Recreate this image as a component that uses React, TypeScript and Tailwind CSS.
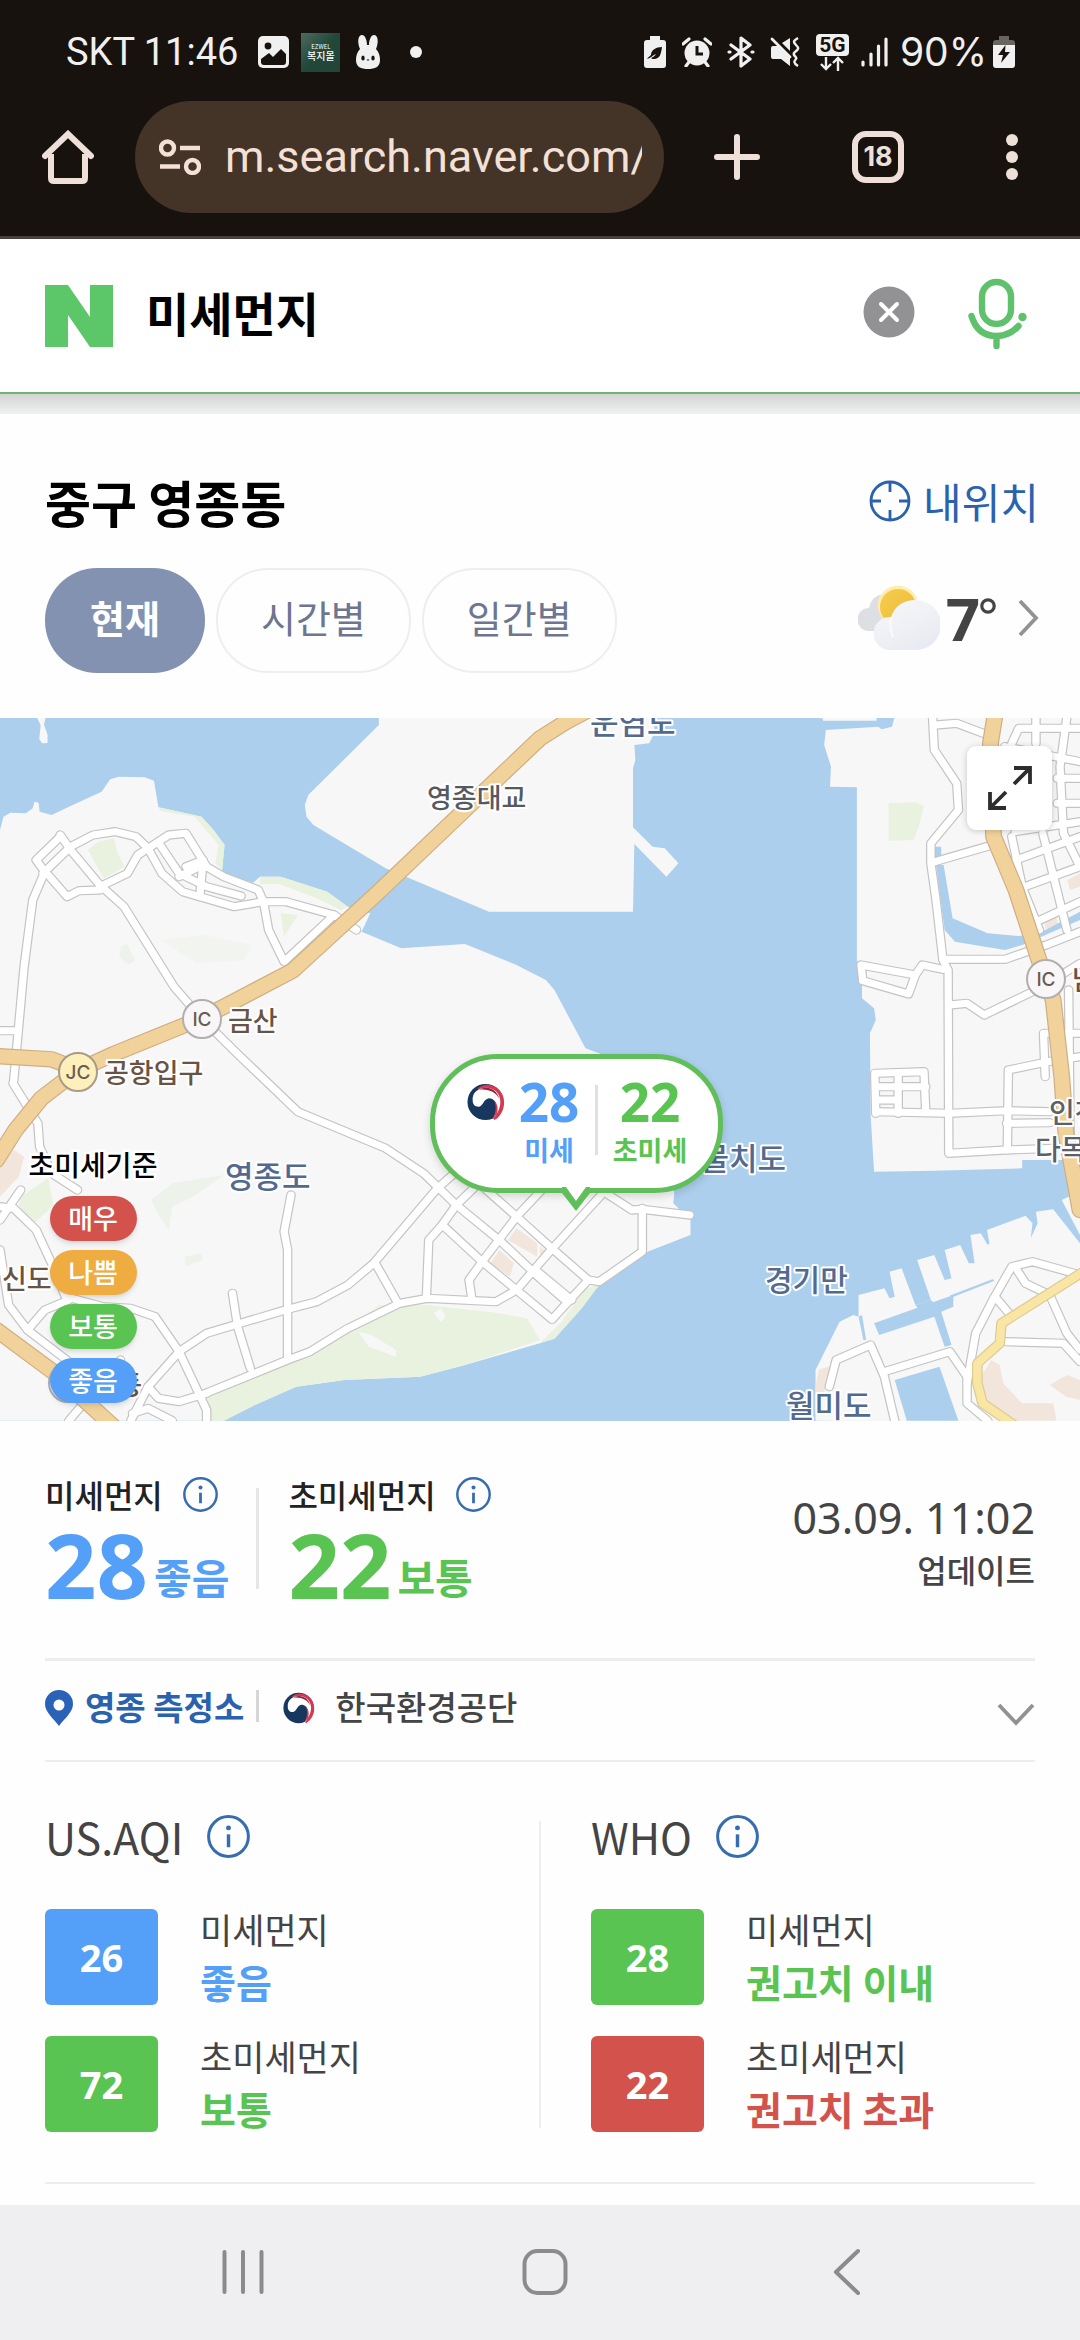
import React from "react";

const KR = "font-['Noto_Sans_CJK_KR',sans-serif]";

/* ---------- icons ---------- */

function Taegeuk({ className }: { className: string }) {
  return (
    <svg viewBox="0 0 40 40" className={className} aria-hidden="true">
      <circle cx="19.500" cy="20" r="19" fill="#17375e" />
      <path d="M11 6C20-2 34 2 38 14c3 10-1 20-9 25l-2-2c6-9 5-27-16-31Z" fill="#d23a52" />
      <path
        d="M6 19C5 10 12 5 20 5c10 0 16 8 15 17-1 7-4 12-9 17 5-4 7-9 6-14-1-6-5-9-9-9-6 1-6 9-11 9-4 0-6-3-6-6Z"
        fill="#fff"
      />
      <path d="M13 7c9-5 19 0 21 10-3-7-11-11-21-10Z" fill="#9c2340" />
    </svg>
  );
}

function InfoIcon({ className }: { className: string }) {
  return (
    <svg viewBox="0 0 40 40" className={className} aria-hidden="true">
      <circle cx="20" cy="20" r="18.500" fill="none" stroke="#356db0" strokeWidth="2.800" />
      <circle cx="20" cy="12" r="2.300" fill="#356db0" />
      <path d="M20 18v12" stroke="#356db0" strokeWidth="3.200" />
    </svg>
  );
}

function StatusLeft() {
  return (
    <div className="flex items-center">
      <span className="text-[38px] leading-10 text-[#f0f0f0]">SKT 11:46</span>
      <svg viewBox="0 0 31 32" className="ml-5 h-8 w-[31px]" aria-hidden="true">
        <rect width="31" height="32" rx="5" fill="#f0f0f0" />
        <circle cx="10" cy="10" r="3.400" fill="#17120e" />
        <path d="M3 23l8-6 4 4 8-8 5 5v8a3 3 0 0 1-3 3H6a3 3 0 0 1-3-3Z" fill="#17120e" />
      </svg>
      <span
        className={`${KR} ml-3 flex h-[39px] w-[39px] flex-col items-center justify-center bg-linear-to-br from-[#4d6b5e] via-[#21483a] to-[#234538] text-white`}
      >
        <span className="text-[6px] leading-[7px]">EZWEL</span>
        <span className="text-[10px] font-medium leading-[11px]">복지몰</span>
      </span>
      <svg viewBox="0 0 26 36" className="ml-[15px] h-9 w-[26px]" aria-hidden="true">
        <path
          d="M5 15C2 8 3 1 7 1c3 0 5 5 5 10h2c0-5 2-10 5-10 4 0 5 7 2 14 3 3 4 7 4 11 0 7-5 9-12 9S1 33 1 26c0-4 1-8 4-11Z"
          fill="#f0f0f0"
        />
        <ellipse cx="8" cy="24" rx="1.700" ry="2.600" fill="#17120e" />
        <ellipse cx="18" cy="24" rx="1.700" ry="2.600" fill="#17120e" />
        <path d="M11.500 25.500h3L13 27Z" fill="#17120e" />
      </svg>
      <span className="ml-[29px] h-3 w-3 rounded-full bg-[#f0f0f0]" />
    </div>
  );
}

function StatusRight() {
  return (
    <div className="flex items-center">
      <svg viewBox="0 0 22 32" className="h-8 w-[22px]" aria-hidden="true">
        <path d="M6 0h10v4h3a3 3 0 0 1 3 3v22a3 3 0 0 1-3 3H3a3 3 0 0 1-3-3V7a3 3 0 0 1 3-3h3Z" fill="#f0f0f0" />
        <path d="M3 23c1-2 3-3 4-4 0-5 5-8 11-8-1 7-2 12-8 12-1 0-2 0-3-1 2-1 4-2 5-4-3 1-5 4-9 5Z" fill="#17120e" />
      </svg>
      <svg viewBox="0 0 30 30" className="ml-4 h-[30px] w-[30px]" aria-hidden="true">
        <circle cx="15" cy="16" r="12.500" fill="#f0f0f0" />
        <path d="M1 7l6-5M29 7l-6-5M7 25l-3 4M23 25l3 4" stroke="#f0f0f0" strokeWidth="3.200" strokeLinecap="round" />
        <path d="M15 9v8h6" fill="none" stroke="#17120e" strokeWidth="3" />
      </svg>
      <svg viewBox="0 0 28 32" className="ml-[15px] h-8 w-7" aria-hidden="true">
        <path
          d="M4 9l19 14-9 7V2l9 7L4 23M2 16h1M25 16h1"
          fill="none"
          stroke="#f0f0f0"
          strokeWidth="3.200"
          strokeLinecap="round"
          strokeLinejoin="round"
        />
      </svg>
      <svg viewBox="0 0 30 30" className="ml-[15px] h-[30px] w-[30px]" aria-hidden="true">
        <path d="M1 11q0-2 2-2h5l12 12v8l-9-7H3q-2 0-2-2ZM12 6l8-5v13Z" fill="#f0f0f0" />
        <path d="M2 2l18 18" stroke="#f0f0f0" strokeWidth="2.800" strokeLinecap="round" />
        <path d="M28 1c-5 3-5 4-2 7s3 4-1 7 3 5 1 7-3 4 2 7" fill="none" stroke="#f0f0f0" strokeWidth="2.400" />
      </svg>
      <span className="ml-4 flex flex-col items-center">
        <span className="flex h-[22px] w-[33px] items-center justify-center rounded bg-[#f0f0f0] text-[21px] font-bold leading-5 text-[#17120e]">
          5G
        </span>
        <svg viewBox="0 0 24 15" className="h-[15px] w-6" aria-hidden="true">
          <path d="M6 1v12M1 8l5 5 5-5M18 15V3M13 7l5-5 5 5" fill="none" stroke="#f0f0f0" strokeWidth="2.400" />
        </svg>
      </span>
      <svg viewBox="0 0 27 30" className="ml-3 h-[30px] w-[27px]" aria-hidden="true">
        <path d="M2 25v3M10 17v11M17.500 9v19M25 2v26" stroke="#f0f0f0" strokeWidth="3.200" strokeLinecap="round" />
      </svg>
      <span className="ml-3 font-['Inter',sans-serif] text-[39px] leading-10 text-[#f0f0f0]">90%</span>
      <svg viewBox="0 0 22 32" className="ml-1.5 h-8 w-[22px]" aria-hidden="true">
        <path d="M6 0h10v4h3a3 3 0 0 1 3 3v2H0V7a3 3 0 0 1 3-3h3Z" fill="#686460" />
        <path d="M0 9h22v20a3 3 0 0 1-3 3H3a3 3 0 0 1-3-3Z" fill="#f0f0f0" />
        <path d="M12.500 9L5 19h5l-2 8 9-11h-5Z" fill="#17120e" />
      </svg>
    </div>
  );
}

function BrowserBar() {
  return (
    <header className="border-b-3 border-[#4a403b] bg-[#17120e] pb-[23px] pt-8">
      <div className="flex h-10 items-center justify-between pl-[66px] pr-[65px] font-['Roboto',sans-serif]">
        <StatusLeft />
        <StatusRight />
      </div>
      <div className="mt-[29px] flex items-center pl-[42px] pr-[62px]">
        <button aria-label="홈" className="shrink-0">
          <svg viewBox="0 0 52 54" className="h-[54px] w-[52px]" fill="none" stroke="#eee0d9" strokeWidth="6">
            <path d="M3 26L26 4l23 22" strokeLinecap="round" />
            <path d="M9 24v24q0 3 3 3h28q3 0 3-3V24" />
          </svg>
        </button>
        <div className="ml-[41px] flex h-28 min-w-0 flex-1 items-center rounded-full bg-[#443327] pl-6 pr-[22px]">
          <svg viewBox="0 0 42 36" className="h-9 w-[42px] shrink-0" fill="none" stroke="#f3e0d6" strokeWidth="4.400" aria-hidden="true">
            <circle cx="8.500" cy="9" r="6.500" />
            <circle cx="33.500" cy="27.500" r="6.500" />
            <path d="M21 9h20M1 27.500h20" />
          </svg>
          <input
            aria-label="주소"
            readOnly
            value="m.search.naver.com/search"
            className="ml-6 min-w-0 flex-1 bg-transparent font-['Roboto',sans-serif] text-[45px] leading-[60px] text-[#f3e0d6] outline-none"
          />
        </div>
        <button aria-label="새 탭" className="ml-[50px] shrink-0">
          <svg viewBox="0 0 46 46" className="h-[46px] w-[46px]" stroke="#eee0d9" strokeWidth="6" strokeLinecap="round">
            <path d="M23 3v40M3 23h40" />
          </svg>
        </button>
        <button
          aria-label="탭 18개"
          className="ml-[92px] flex h-[52px] w-[52px] shrink-0 items-center justify-center rounded-[14px] border-6 border-[#eee0d9] font-['Inter',sans-serif] text-[27px] font-bold text-[#eee0d9]"
        >
          18
        </button>
        <button aria-label="메뉴" className="ml-[102px] flex shrink-0 flex-col gap-[5px]">
          <span className="h-3 w-3 rounded-full bg-[#eee0d9]" />
          <span className="h-3 w-3 rounded-full bg-[#eee0d9]" />
          <span className="h-3 w-3 rounded-full bg-[#eee0d9]" />
        </button>
      </div>
    </header>
  );
}

function SearchBar() {
  return (
    <>
      <form className="flex h-[155px] items-center border-b-2 border-[#70b377] bg-white pl-[45px] pr-[52px]">
        <svg viewBox="0 0 68 62" className="h-[62px] w-[68px] shrink-0" role="img" aria-label="네이버">
          <path d="M0 0h23l22 32V0h23v62H45L23 30v32H0Z" fill="#5cc768" />
        </svg>
        <input
          aria-label="검색어"
          readOnly
          value="미세먼지"
          className="mb-2 ml-[33px] min-w-0 flex-1 bg-transparent text-[47px] font-bold leading-[70px] text-black outline-none"
        />
        <button type="button" aria-label="지우기" className="mb-2 shrink-0">
          <svg viewBox="0 0 52 52" className="h-[52px] w-[52px]">
            <circle cx="26" cy="26" r="25.500" fill="#929294" />
            <path d="M18 18l16 16M34 18L18 34" stroke="#fff" strokeWidth="4" strokeLinecap="round" />
          </svg>
        </button>
        <button type="button" aria-label="음성 검색" className="mb-1 ml-[53px] shrink-0">
          <svg viewBox="0 0 60 72" className="h-[72px] w-[60px]" fill="none" stroke="#60c16c" strokeWidth="6.400" strokeLinecap="round">
            <rect x="14" y="4" width="29" height="42" rx="14.500" />
            <path d="M3.500 38q6 20 25 20 13 0 22-10M28.500 58v10" />
            <circle cx="54.500" cy="39" r="4.200" fill="#60c16c" stroke="none" />
          </svg>
        </button>
      </form>
      <div className="h-5 bg-linear-to-b from-[#d3d5d5] to-[#f0f0f1]" />
    </>
  );
}

function WeatherIcon() {
  return (
    <svg viewBox="0 0 82 66" className="h-[66px] w-[82px]" aria-hidden="true">
      <defs>
        <linearGradient id="cloudFront" x1="0" y1="0" x2="0.600" y2="1">
          <stop offset="0" stopColor="#f8f8fa" />
          <stop offset="1" stopColor="#e9ebf2" />
        </linearGradient>
        <linearGradient id="sunFill" x1="0" y1="0" x2="1" y2="1">
          <stop offset="0" stopColor="#f7cd4b" />
          <stop offset="1" stopColor="#ecb93c" />
        </linearGradient>
      </defs>
      <path d="M11 46a11 11 0 0 1 0-23Q14 9 28 9v37Z" fill="#dedfe3" />
      <circle cx="40" cy="20.500" r="20" fill="#fdeeb0" />
      <circle cx="40" cy="22" r="18" fill="url(#sunFill)" />
      <path d="M31 65a16 16 0 0 1 2-33Q39 15 58 15a25 25 0 0 1 0 50Z" fill="url(#cloudFront)" />
      <path d="M33 32q-2 10 2 20" fill="none" stroke="#fff" strokeWidth="3" opacity=".5" />
    </svg>
  );
}

function LocationHeader() {
  return (
    <section className="px-[45px] pb-[45px] pt-[51px]">
      <div className="flex items-center justify-between">
        <h1 className="text-[50px] font-bold leading-[72px] text-black">중구 영종동</h1>
        <a href="#location" className="-mr-1 flex items-center text-[42px] leading-[60px] text-[#2a62ad]">
          <svg viewBox="0 0 42 42" className="mr-3 h-[42px] w-[42px]" fill="none" stroke="#2a62ad" strokeWidth="2.800" aria-hidden="true">
            <circle cx="21" cy="21" r="19" />
            <path d="M21 2v10M21 30v10M2 21h10M30 21h10" />
          </svg>
          내위치
        </a>
      </div>
      <div className="mt-[31px] flex items-center justify-between">
        <div className="flex gap-[11px] text-[38px]">
          <button className="rounded-[52px] bg-[#8392b1] px-[45px] pb-[26px] pt-[18px] font-bold leading-[61px] text-white">
            현재
          </button>
          <button className="rounded-[52px] border-2 border-[#eeeef0] px-[43px] pb-6 pt-4 leading-[61px] text-[#6d7590]">
            시간별
          </button>
          <button className="rounded-[52px] border-2 border-[#eeeef0] px-[43px] pb-6 pt-4 leading-[61px] text-[#6d7590]">
            일간별
          </button>
        </div>
        <a href="#weather" className="-mr-1 mb-1.5 flex items-center">
          <WeatherIcon />
          <span className="ml-1.5 font-['Noto_Sans',sans-serif] text-[60px] font-bold leading-[60px] text-[#444]">7</span>
          <svg viewBox="0 0 16 16" className="mb-6 h-4 w-4" aria-hidden="true">
            <circle cx="8" cy="8" r="6.200" fill="none" stroke="#444" strokeWidth="3.200" />
          </svg>
          <svg viewBox="0 0 22 40" className="ml-[21px] h-10 w-[22px]" fill="none" stroke="#929292" strokeWidth="3.800" aria-hidden="true">
            <path d="M3 3l16 17L3 37" />
          </svg>
        </a>
      </div>
    </section>
  );
}

/* ---------- map ---------- */

const whiteRoads = [
  "175,405 205,450 290,555 360,620 505,860 585,955 690,1062 865,1235 1120,1345 1230,1420 1325,1515 1455,1625 1568,1735 1640,1800",
  "175,410 105,480 130,515 95,600 70,800 40,1140 38,1150 110,1270 115,1340 150,1420 225,1470",
  "125,520 205,440 270,405 335,395 395,410 430,445 490,405 540,400 600,500 650,530 750,570 765,605 830,605 970,645 825,785 780,690 765,605",
  "430,445 470,520 530,575 680,620 765,605",
  "290,560 370,520 400,465 430,445",
  "140,525 195,590 230,572 290,570",
  "465,435 520,520 600,560 700,588",
  "540,500 590,480 580,590",
  "520,530 580,500",
  "0,992 45,992",
  "970,645 1035,690",
  "845,1485 825,1595 835,1650 835,1975",
  "675,1780 690,1880 727,2005",
  "380,2162 430,2060 520,1955 600,1900 835,1828 920,1805 1010,1755 1085,1690 1270,1465 1330,1410",
  "585,2085 840,1978 900,1955 1010,1885 1160,1810 1240,1795 1440,1805 1500,1770 1600,1650 1750,1480",
  "1090,1690 1150,1800",
  "1238,1795 1245,1620 1280,1580 1325,1515 1420,1420",
  "1370,1795 1362,1740 1400,1685 1500,1550 1600,1440",
  "1290,1580 1400,1685 1500,1770 1603,1858 1708,1740",
  "1380,1440 1500,1550 1608,1650 1708,1740 1740,1745 1865,1655 1865,1525",
  "1555,1710 1660,1800",
  "1760,1480 1835,1530 1865,1528 2003,1545",
  "450,1850 520,1955 600,2130 600,2162",
  "0,1520 40,1525 105,1590 150,1690 190,1790 300,1820 380,1825 450,1850",
  "0,1650 25,1815 80,1890 200,1985",
  "80,1890 130,1830 200,1800",
  "0,1560 60,1470",
  "430,2060 460,2095 520,2105 600,2080",
  "385,2140 430,2125 500,2162",
  "200,2162 350,1980",
  "2708,54 2713,150 2778,250 2783,330 2703,430 2703,490 2718,600 2738,780 2753,810 2755,1360 2920,1350 3060,1345",
  "2718,75 2778,70 2868,105",
  "2708,487 2888,433",
  "2738,778 2918,778 3038,735 3136,695",
  "2505,840 2500,795 2658,825 2678,795 2738,808",
  "2505,842 2638,882 2658,825",
  "2758,915 2808,910 2858,945 3018,865 3136,790",
  "2543,1240 2540,1120 2683,1115 2688,1235",
  "2543,1235 2758,1240 2923,1232 3048,1235",
  "2608,1120 2608,1240",
  "2545,1160 2688,1160",
  "2545,1200 2600,1200",
  "2925,1350 2928,1110 3068,1080 3136,1070",
  "2923,1270 3048,1268",
  "3035,1130 3030,1000 3136,1000",
  "3008,50 3008,130",
  "3098,50 3078,200 3088,400 3136,500",
  "2938,130 2958,85 3136,85",
  "2918,140 3136,185",
  "3070,235 3136,235",
  "3070,310 3136,310",
  "2948,395 3136,365",
  "2938,410 2968,560 3018,690",
  "3028,400 3098,690",
  "2950,480 3136,410",
  "2975,560 3136,500",
  "3010,665 3136,605",
  "3103,870 3108,1400",
  "2408,2060 2428,1980 2528,1935 2568,2030 2598,2162",
  "2568,2015 2758,1955 2808,2030 2808,2110 2868,2162",
  "2808,2050 2833,1900 2888,1790 2938,1700 2998,1685 3136,1725",
  "2953,1710 2978,1750 3048,1785 3098,1900 3136,1950",
  "2918,1925 3088,1930 3136,1985",
  "2893,1795 2938,1850",
];

const orangeRoads = [
  "1700,35 1640,68 1568,115 1100,575 850,812 585,955 330,1062 225,1112 120,1195 45,1290 -10,1380",
  "-10,1068 150,1078 235,1112",
  "-10,1890 160,2020 330,2180",
  "2890,40 2876,130 2885,410 2950,570 3020,790 3058,900 3083,1130 3095,1300 3136,1530",
];

function Roads({ lines, edge, fill, width }: { lines: string[]; edge: string; fill: string; width: number }) {
  return (
    <g fill="none" strokeLinecap="round" strokeLinejoin="round">
      <g stroke={edge} strokeWidth={width + 7}>
        {lines.map((p) => (
          <polyline key={p} points={p} />
        ))}
      </g>
      <g stroke={fill} strokeWidth={width}>
        {lines.map((p) => (
          <polyline key={p} points={p} />
        ))}
      </g>
    </g>
  );
}

type Label = { x: number; y: number; t: string; s: number; c: string; a?: "start" | "end" };
const labels: Label[] = [
  { x: 427, y: 90, t: "영종대교", s: 27, c: "#555a62" },
  { x: 228, y: 313, t: "금산", s: 27, c: "#6b5343" },
  { x: 104, y: 365, t: "공항입구", s: 27, c: "#6b5343" },
  { x: 590, y: 16, t: "운염도", s: 31, c: "#536a8f" },
  { x: 225, y: 470, t: "영종도", s: 31, c: "#536a8f" },
  { x: 786, y: 452, t: "물치도", s: 31, c: "#536a8f", a: "end" },
  { x: 765, y: 573, t: "경기만", s: 30, c: "#536a8f" },
  { x: 786, y: 699, t: "월미도", s: 31, c: "#536a8f" },
  { x: 1049, y: 405, t: "인천", s: 28, c: "#5d6068" },
  { x: 1035, y: 442, t: "다목", s: 28, c: "#5d6068" },
  { x: 1072, y: 272, t: "남", s: 27, c: "#6b5343" },
  { x: 2, y: 571, t: "신도", s: 27, c: "#6b5343" },
  { x: 142, y: 677, t: "동", s: 27, c: "#6b5343", a: "end" },
];

function MapDrawing() {
  return (
    <svg viewBox="0 0 1080 703" className="block h-auto w-full" role="img" aria-label="영종도 주변 지도">
      <rect width="1080" height="703" fill="#accfed" />
      <g transform="translate(0 -18) scale(0.34439 0.33333)">
        <g fill="#f7f7f7">
          <path d="M0 390L10 350 30 338 75 340 95 325 100 305 112 308 115 335 150 345 200 320 295 275 320 238 345 230 420 232 447 242 460 322 585 350 620 390 652 435 645 510 650 525 735 548 755 530 815 530 950 575 1010 620 1075 640 1050 695 1165 745 1350 732 1500 795 1585 840 1610 870 1700 1045 1740 1060 1900 1250 1958 1480 1955 1510 2005 1560 2005 1605 1880 1655 1750 1745 1690 1810 1610 1915 1568 1930 1350 1995 1220 2030 1000 2040 860 2060 740 2115 650 2162H0Z" />
          <path d="M108 54h24l-4 20 10 30v25l-16 1-8-14 4-40Z" />
          <path d="M1100 54v21L895 285l-10 30 5 35 20 25 210 130 300 130h418l4-203 93 98 35-40-40-45-35-5-57-58V205l7-25-3-45 43-5 15-30V54Z" />
          <path d="M2385 40h160v22h-155Z" />
          <path d="M2398 90l152-10 10 8 30-8 8-30h538v1330h-168v25l-255 7-175 3-10-170-2-245 17-40-5-35-35-30v-65l-15-50V262l-78-2 3-60-20-65Z" />
          <path d="M2368 2162v-152l70-145 40-20 15 5v-65l75-20 15 30 15-5-15-75 35-10 40 110 45-15-40-120 50-15 30 75 20-5-20-85 45-15 25 55h17l-12-85 30-5 20 35 5-5-7-40 112-43 20 23-5 45 20-45-5-35 50-7 78 102v540Z" />
          <path d="M3083 1500l30-15 23 45v75Z" />
        </g>
        <g fill="#e9f1df">
          <path d="M255 450l30-25 45-10 12 45 20 40-60 35Z" />
          <path d="M815 640l50 5-40 65Z" />
          <path d="M460 322l125 28 35 40 32 45-7 75-20-20 10-55-70-85-100-18Z" />
          <path d="M755 530h60l135 45 60 45-20 10-80-40-100-38h-55Z" />
          <path d="M60 1490l80-55 15 80-60 60-40-60Z" />
          <path d="M600 2085l240-105 170-85 90-80 140 0 210 25 80 15 38 65-218 75-130 35-220 10-140 20-120 55-90 47h-40Z" />
          <path d="M1700 1765l40-10-50 70-80 92-42 12 60-60Z" />
          <path d="M2580 310l80-3 23 11-15 60-15 42-73 2Z" />
        </g>
        <g fill="#edf2ea">
          <path d="M350 740l20-8 22 50-20 12-25-22Z" />
          <path d="M440 1500l60-50 150-25-90 65-60 30-10 70-30-45Z" />
          <path d="M535 1670l50-10 5 20-50 18Z" />
          <path d="M470 720l120-15 140 30-20 45-140 10Z" opacity=".5" />
        </g>
        <path d="M1040 1895l40 10 70 45v20l-80-30ZM1260 1840l20-15 15 25-15 15Z" fill="#f7f7f7" />
        <g fill="#f1e5dc">
          <path d="M1500 1585l60 45v40l-85-50ZM1450 1650l42 40-12 40-55-40ZM1568 1640l15 12-15 20Z" />
          <path d="M0 1390l40-40 30 20-15 60-55 60ZM2368 2060l10-52 35-10-25 100h-20Z" />
          <path d="M2878 1980l25 15 10 55 55 60 90 0 10 52h-120l-90-52-10-80ZM3048 2055l50-30 38 15v60l-40-10Z" />
          <path d="M3030 655l35-10 10 35-35 20ZM3100 540l36-20v40l-30 10Z" />
        </g>
        <g fill="#accfed">
          <path d="M2714 440h19v35h-19ZM2718 495h22l26 160 102 45 90 8 60-8 118-65v25l-168 75-50 15-145-25-30-35Z" />
          <path d="M2493 1850l10-5 12 75h-8ZM2538 1870l230-85v35l-35 15 30 100-20 5-30-90-160 55ZM2658 1815l45-15 20 20-50 15Z" />
          <path d="M2598 2040l130-40 55 162h-150Z" />
        </g>
        <path d="M2760 1790l125-50" stroke="#accfed" strokeWidth="7" />
        <Roads lines={whiteRoads} edge="#c4c4c4" fill="#ffffff" width={21} />
        <Roads lines={["3146,1715 2908,1870 2903,1930 2838,1990 2838,2050 2853,2110 2940,2172"]} edge="#dccb93" fill="#f9e6a5" width={24} />
        <Roads lines={orangeRoads} edge="#cfae83" fill="#f2d29b" width={42} />
      </g>
      <g strokeWidth="2" fontFamily="Inter, sans-serif" fontSize="19" fontWeight="500" textAnchor="middle">
        <circle cx="202" cy="301" r="19" fill="#f8f6f6" stroke="#b3aeae" />
        <circle cx="1046" cy="261" r="19" fill="#f8f6f6" stroke="#b3aeae" />
        <circle cx="78" cy="354" r="19" fill="#fdf0bb" stroke="#a99b88" />
        <circle cx="68" cy="665" r="19" fill="#f8f6f6" stroke="#b3aeae" />
        <text x="202" y="308" fill="#6b5c52">IC</text>
        <text x="1046" y="268" fill="#6b5c52">IC</text>
        <text x="78" y="361" fill="#6b5c52">JC</text>
      </g>
      <g fontFamily="'Noto Sans CJK KR', sans-serif" fontWeight="500" stroke="#ffffff" strokeWidth="4" strokeLinejoin="round" paintOrder="stroke">
        {labels.map((l) => (
          <text key={l.t} x={l.x} y={l.y} fontSize={l.s} fill={l.c} textAnchor={l.a ?? "start"}>
            {l.t}
          </text>
        ))}
      </g>
    </svg>
  );
}

function AirMap() {
  return (
    <section className="relative overflow-hidden">
      <MapDrawing />
      <button
        aria-label="지도 확대"
        className="absolute right-7 top-7 flex h-[84px] w-[85px] items-center justify-center rounded-[9px] bg-white shadow-[0_1px_6px_rgba(0,0,0,0.2)]"
      >
        <svg viewBox="0 0 46 46" className="h-[46px] w-[46px]" fill="none" stroke="#2d2d2d" strokeWidth="3.800">
          <path d="M27 3h16v16M43 3L27 19M3 27v16h16M3 43l16-16" />
        </svg>
      </button>

      <div className="absolute left-[28px] top-[426px] w-[130px]">
        <p className="whitespace-nowrap text-center text-[28px] font-medium leading-[40px] text-black [paint-order:stroke] [-webkit-text-stroke:5px_#fff]">
          초미세기준
        </p>
        <ul className="mt-3 flex flex-col items-center gap-[9px] text-[27px] font-medium text-white">
          <li className="w-[87px] rounded-full bg-[#d3534c] pb-0.5 text-center leading-[43px] shadow-md">매우</li>
          <li className="w-[87px] rounded-full bg-[#efac41] pb-0.5 text-center leading-[43px] shadow-md">나쁨</li>
          <li className="w-[87px] rounded-full bg-[#59c451] pb-0.5 text-center leading-[43px] shadow-md">보통</li>
          <li className="w-[87px] rounded-full bg-[#549ff8] pb-0.5 text-center leading-[43px] shadow-md">좋음</li>
        </ul>
      </div>

      <div className="absolute left-[430px] top-[336px] w-[293px]">
        <div className="flex h-[139px] rounded-[68px] border-5 border-[#60bf5a] bg-white pl-8 pt-5 shadow-[0_3px_8px_rgba(0,0,0,0.15)]">
          <Taegeuk className="mt-1 h-[38px] w-[38px]" />
          <div className="ml-3.5 flex w-[60px] flex-col items-center">
            <span className="font-['Noto_Sans',sans-serif] text-[53px] font-bold leading-[45px] text-[#549ff8]">28</span>
            <span className="mt-1.5 text-[27px] font-bold leading-[40px] text-[#549ff8]">미세</span>
          </div>
          <span className="ml-4 mt-1.5 h-[70px] w-[3px] bg-[#e0e0e0]" />
          <div className="ml-3 flex w-[80px] flex-col items-center">
            <span className="font-['Noto_Sans',sans-serif] text-[53px] font-bold leading-[45px] text-[#59c451]">22</span>
            <span className="mt-1.5 whitespace-nowrap text-[27px] font-bold leading-[40px] text-[#59c451]">초미세</span>
          </div>
        </div>
        <svg viewBox="0 0 28 24" className="absolute left-[132px] top-[133px] h-6 w-7" aria-hidden="true">
          <path d="M0 0h28v6L14 24 0 6Z" fill="#60bf5a" />
          <path d="M4 0h20l-10 14Z" fill="#fff" />
        </svg>
      </div>
    </section>
  );
}

/* ---------- readings ---------- */

function Reading({ name, value, grade, color }: { name: string; value: string; grade: string; color: string }) {
  return (
    <div>
      <div className="flex items-center">
        <h2 className="text-[32px] font-medium leading-10 text-[#222]">{name}</h2>
        <button aria-label={`${name} 정보`} className="ml-5">
          <InfoIcon className="h-[35px] w-[35px]" />
        </button>
      </div>
      <p className={`mt-1 flex items-end font-bold ${color}`}>
        <span className="font-['Noto_Sans',sans-serif] text-[90px] leading-[92px]">{value}</span>
        <span className="mb-3.5 ml-1.5 text-[41px] leading-10">{grade}</span>
      </p>
    </div>
  );
}

function Readings() {
  return (
    <section className="flex items-center justify-between pb-12 pt-[53px]">
      <div className="flex items-center">
        <Reading name="미세먼지" value="28" grade="좋음" color="text-[#549ff8]" />
        <span className="mb-2 ml-[27px] mr-[29px] h-[101px] w-[3px] bg-[#e6e6e8]" />
        <Reading name="초미세먼지" value="22" grade="보통" color="text-[#59c451]" />
      </div>
      <p className="text-right text-[#444]">
        <span className="block font-['Noto_Sans',sans-serif] text-[43px] leading-[54px]">03.09. 11:02</span>
        <span className="block text-[32px] font-medium leading-[48px]">업데이트</span>
      </p>
    </section>
  );
}

function Station() {
  return (
    <button className="flex w-full items-center border-b-2 border-t-3 border-[#ededef] pb-[26px] pt-[17px] text-[33px] font-medium leading-14">
      <svg viewBox="0 0 28 36" className="mt-1 h-9 w-7" aria-hidden="true">
        <path d="M14 0a14 14 0 0 1 14 14c0 8-8 14-14 22C8 28 0 22 0 14A14 14 0 0 1 14 0Z" fill="#2a62b8" />
        <circle cx="14" cy="15" r="5.500" fill="#fff" />
      </svg>
      <span className="ml-3 font-bold text-[#2a62ad]">영종 측정소</span>
      <span className="ml-3 h-8 w-[3px] bg-[#d6d6d8]" />
      <Taegeuk className="ml-6 mt-1 h-8 w-8" />
      <span className="ml-5 text-[#444]">한국환경공단</span>
      <svg viewBox="0 0 38 24" className="ml-auto mt-4 h-6 w-[38px]" fill="none" stroke="#929292" strokeWidth="3.800" aria-hidden="true">
        <path d="M2 3l17 18L36 3" />
      </svg>
    </button>
  );
}

type Row = { value: string; box: string; name: string; grade: string; text: string };

function IndexColumn({ title, rows }: { title: string; rows: Row[] }) {
  return (
    <div>
      <div className="flex h-[43px] items-center">
        <h2 className="text-[43px] leading-[43px] text-[#444]">{title}</h2>
        <button aria-label={`${title} 정보`} className="ml-6">
          <InfoIcon className="h-[43px] w-[43px]" />
        </button>
      </div>
      <ul className="mt-[51px] flex flex-col gap-[31px]">
        {rows.map((r) => (
          <li key={r.name} className="flex items-center">
            <span
              className={`flex h-24 w-[113px] items-center justify-center rounded-md font-['Noto_Sans',sans-serif] text-[38px] font-bold text-white ${r.box}`}
            >
              {r.value}
            </span>
            <p className="-my-2 ml-[42px] pb-1">
              <span className="block text-[35px] leading-[52px] text-[#444]">{r.name}</span>
              <span className={`block text-[39px] font-bold leading-[52px] ${r.text}`}>{r.grade}</span>
            </p>
          </li>
        ))}
      </ul>
    </div>
  );
}

function Indexes() {
  return (
    <section className="grid grid-cols-[1fr_2px_1fr] border-b-2 border-[#ededef] pb-[50px] pt-[53px]">
      <IndexColumn
        title="US.AQI"
        rows={[
          { value: "26", box: "bg-[#549ff8]", name: "미세먼지", grade: "좋음", text: "text-[#549ff8]" },
          { value: "72", box: "bg-[#59c451]", name: "초미세먼지", grade: "보통", text: "text-[#59c451]" },
        ]}
      />
      <span className="mb-1 mt-1.5 bg-[#eeeef0]" />
      <div className="pl-[50px]">
        <IndexColumn
          title="WHO"
          rows={[
            { value: "28", box: "bg-[#59c451]", name: "미세먼지", grade: "권고치 이내", text: "text-[#59c451]" },
            { value: "22", box: "bg-[#d3534c]", name: "초미세먼지", grade: "권고치 초과", text: "text-[#d3534c]" },
          ]}
        />
      </div>
    </section>
  );
}

function SystemNav() {
  return (
    <nav className="grid grid-cols-3 bg-[#efeff1] pb-11 pl-[92px] pr-[82px] pt-[43px]">
      <button aria-label="최근 앱" className="flex justify-center">
        <svg viewBox="0 0 42 48" className="h-12 w-[42px]" stroke="#8b8b8d" strokeWidth="4" strokeLinecap="round">
          <path d="M2.500 4v40M21 4v40M39.500 4v40" />
        </svg>
      </button>
      <button aria-label="홈 화면" className="flex justify-center">
        <svg viewBox="0 0 46 48" className="h-12 w-[46px]" fill="none" stroke="#8b8b8d" strokeWidth="4">
          <rect x="2.500" y="3" width="41" height="42" rx="13" />
        </svg>
      </button>
      <button aria-label="뒤로" className="flex justify-center">
        <svg viewBox="0 0 28 48" className="h-12 w-7" fill="none" stroke="#8b8b8d" strokeWidth="4" strokeLinecap="round" strokeLinejoin="round">
          <path d="M25 3L3 24l22 21" />
        </svg>
      </button>
    </nav>
  );
}

export default function App() {
  return (
    <div className={`${KR} bg-[#fefefe]`}>
      <BrowserBar />
      <SearchBar />
      <main>
        <LocationHeader />
        <AirMap />
        <div className="px-[45px] pb-[21px]">
          <Readings />
          <Station />
          <Indexes />
        </div>
      </main>
      <SystemNav />
    </div>
  );
}
